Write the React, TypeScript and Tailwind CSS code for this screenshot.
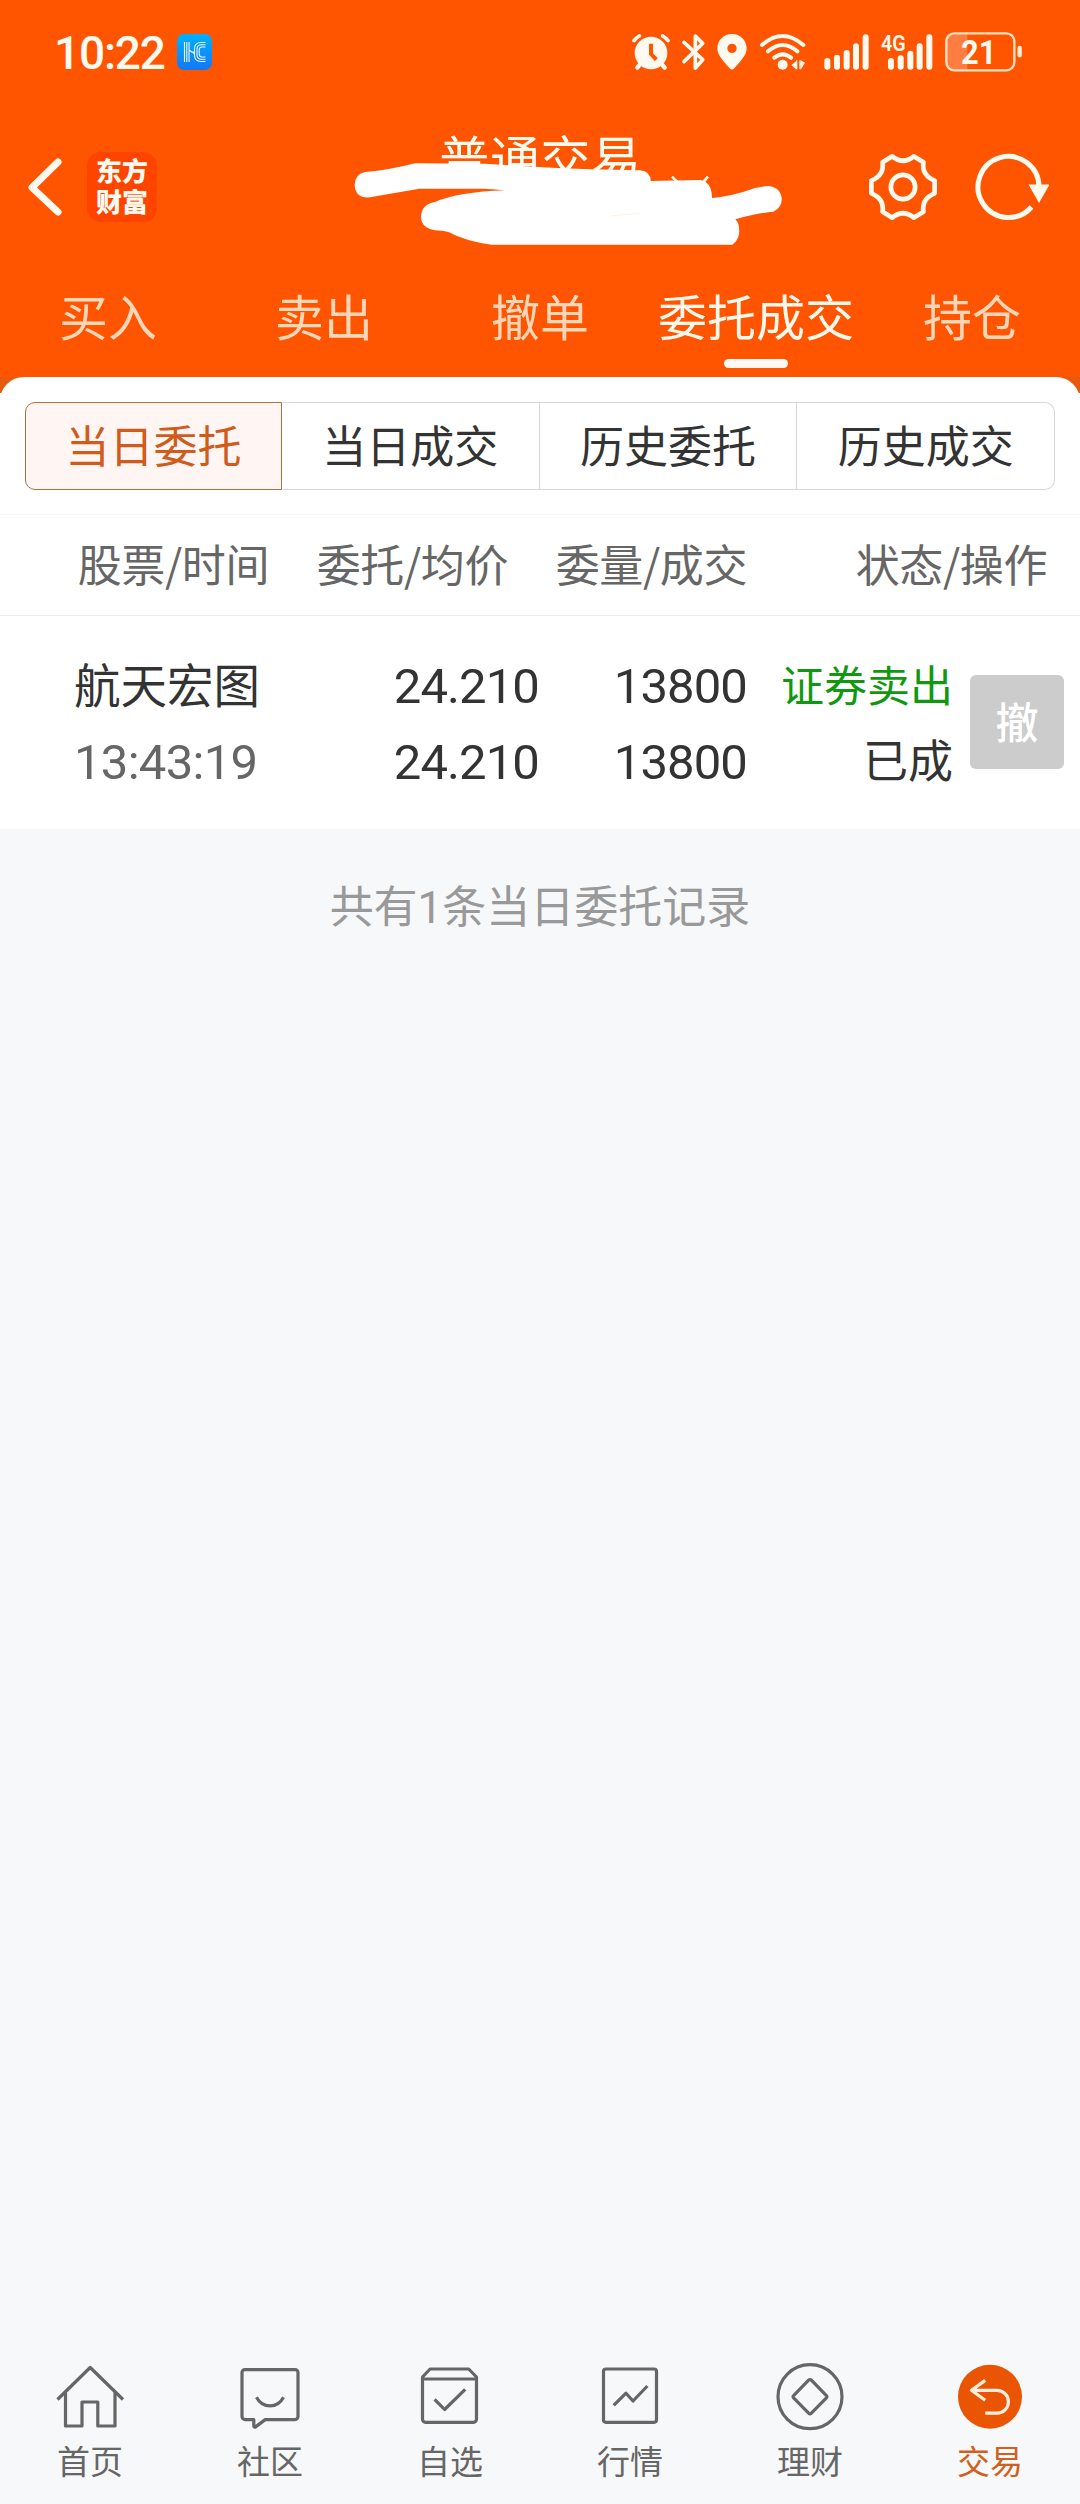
import type { ReactNode } from 'react';

const topTabs = ['买入', '卖出', '撤单', '委托成交', '持仓'];
const segments = ['当日委托', '当日成交', '历史委托', '历史成交'];

const navItems: { label: string; icon: ReactNode }[] = [
  {
    label: '首页',
    icon: (
      <>
        <path d="M3.5 37.5 36.2 5.5 69 37.5" />
        <path d="M11.5 30.5V64H28V40h15.8v24H61V30.5" />
      </>
    ),
  },
  {
    label: '社区',
    icon: (
      <>
        <path d="M11 7.6h50a3 3 0 0 1 3 3v44a3 3 0 0 1-3 3H31.2l-10 7.5q-1.4.4-1.4-1.4v-6.1H11a3 3 0 0 1-3-3v-44a3 3 0 0 1 3-3z" />
        <path d="M22.5 35.3c6 11.5 21 11.5 27 0" />
      </>
    ),
  },
  {
    label: '自选',
    icon: (
      <>
        <path d="M8.5 17h54v40.3a3 3 0 0 1-3 3h-48a3 3 0 0 1-3-3V15l7.6-8h38.6l7.8 8v3" />
        <path d="M20.6 37.3 30.6 47.5 51.2 27.4" />
      </>
    ),
  },
  {
    label: '行情',
    icon: (
      <>
        <rect x="9.5" y="7" width="53" height="53.3" rx="2.5" />
        <path d="M19.7 43.3 32 31.2l7 7.8 14.4-15" />
      </>
    ),
  },
  {
    label: '理财',
    icon: (
      <>
        <circle cx="36" cy="34.7" r="32" />
        <path d="m34.6 18.2-15 15.4q-1 1.1 0 2.2l15 15.4q1.4 1.4 2.8 0l15-15.400q1-1.100 0-2.200l-15-15.400q-1.400-1.400-2.800 0z" />
      </>
    ),
  },
  {
    label: '交易',
    icon: (
      <>
        <circle cx="36" cy="34.7" r="32" fill="#ea5504" stroke="none" />
        <path d="M31.2 18.4 17.5 28.3l13.7 10M17.5 28.3H43a11.4 11.4 0 0 1 0 22.8H31.2" stroke="#ffeedd" />
      </>
    ),
  },
];

function StatusBar() {
  return (
    <div className="flex h-[105px] items-center pl-[54px] text-[#fffaf0]">
      <span className="w-[123px] font-['Roboto'] text-[46px] leading-none font-medium tracking-[-1.2px]">10:22</span>
      <svg className="mb-[1px]" width="35" height="36" viewBox="0 0 35 36">
        <defs>
          <linearGradient id="hc" x1="0" y1="0" x2="0" y2="1">
            <stop offset="0" stopColor="#00b0ff" />
            <stop offset="1" stopColor="#1677f5" />
          </linearGradient>
        </defs>
        <rect width="35" height="36" rx="7" fill="url(#hc)" />
        <g fill="none" stroke="#e8f8ff" strokeWidth="1.1">
          <path d="M7.5 8v20M9.8 8v20M12.1 8v20M12 16l6 4M14 18h4" />
          <path d="M28.5 8.5H24q-6.5 0-6.5 6.5v6q0 6.5 6.5 6.5h4.5M28.5 10.8H24.5q-4.5 0-4.5 4.5v5.4q0 4.5 4.5 4.5h4M28.5 13H25q-2.8 0-2.8 3v4q0 3 2.8 3h3.5" />
        </g>
      </svg>

      <div className="ml-[420px] flex items-center pb-[2px]">
        {/* alarm */}
        <svg width="38" height="38" viewBox="96 98 114 114" fill="none" stroke="currentColor" strokeLinecap="round">
          <circle cx="153" cy="158" r="49" fill="currentColor" stroke="none" />
          <path d="M102 121q7-9 16-14M204 121q-7-9-16-14" strokeWidth="11" />
          <path d="m122 190-10 12M184 190l10 12" strokeWidth="13" />
          <path d="M153 130v31l16 17" stroke="#ff5500" strokeWidth="12" strokeLinecap="butt" />
        </svg>
        {/* bluetooth */}
        <svg className="ml-3" width="23" height="38" viewBox="246 98 69 114" fill="none" stroke="currentColor" strokeWidth="11" strokeLinejoin="round" strokeLinecap="round">
          <path d="m252 126 56 52-22 25v-96l22 22-56 55" />
        </svg>
        {/* location */}
        <svg className="ml-3" width="30" height="38" viewBox="351 98 90 114">
          <path fill="currentColor" fillRule="evenodd" d="M396 101c25 0 44 19 44 43 0 22-19 39-37 60q-7 7-14 0c-18-21-37-38-37-60 0-24 19-43 44-43zm0 29a14 14 0 1 0 0 28 14 14 0 0 0 0-28z" />
        </svg>
        {/* wifi */}
        <svg className="ml-3" width="47" height="38" viewBox="475 98 141 114" fill="none" stroke="currentColor" strokeWidth="12" strokeLinecap="round">
          <path d="M484 134q62-54 124 0M502 153q44-38 88 0M521 172q25-20 50 0" />
          <circle cx="546" cy="193" r="15" fill="currentColor" stroke="none" />
          <path d="m572 194 14-11v24zM613 187l-13-7v28z" fill="currentColor" stroke="none" />
          <path d="M588 180v27M598 180v27" strokeWidth="4" strokeLinecap="butt" />
        </svg>
        {/* signal, sim 1 */}
        <svg className="ml-[18px]" width="46" height="38" viewBox="672 98 138 114" stroke="currentColor" strokeWidth="18" strokeLinecap="round">
          <path d="M682 182v17M711 172v27M740 158v41M768 138v61M797 111v88" />
        </svg>
        {/* signal, sim 2 */}
        <svg className="ml-[10px] overflow-visible" width="54" height="38" viewBox="841 98 162 114" stroke="currentColor" strokeWidth="18" strokeLinecap="round">
          <path d="M874 182v17M903 174v25M932 160v39M960 138v61M989 111v88" />
          <text x="844" y="153" fontSize="67" fontFamily="Roboto, sans-serif" fontWeight="600" fill="currentColor" stroke="none" textLength="74" lengthAdjust="spacingAndGlyphs">4G</text>
        </svg>
        {/* battery */}
        <svg className="ml-[10px]" width="80" height="40" viewBox="1031 95 240 120">
          <path d="M1101 102h-38q-23 0-23 24v58q0 24 23 24h38z" fill="#ff7d40" />
          <rect x="1038" y="99" width="204" height="111" rx="24" fill="none" stroke="#ffe0c0" strokeWidth="7" />
          <path d="M1258 143v22" stroke="#ffe9cf" strokeWidth="13" strokeLinecap="round" />
          <text x="1135" y="191" textAnchor="middle" fontSize="100" fontFamily="Roboto, sans-serif" fontWeight="700" fill="currentColor" textLength="106" lengthAdjust="spacingAndGlyphs">21</text>
        </svg>
      </div>
    </div>
  );
}

function TitleBar() {
  return (
    <div className="relative flex h-[165px] items-center justify-between pr-[31px] pb-[1px] pl-[27px] text-[#fffaf0]">
      <div className="flex items-center">
        <svg width="36" height="60" viewBox="0 0 36 60" fill="none" stroke="currentColor" strokeWidth="7" strokeLinecap="round" strokeLinejoin="round">
          <path d="M31 5 5 30.5 31 55" />
        </svg>
        <div className="ml-6 flex h-[70px] w-[70px] items-center justify-center rounded-[14px] bg-[#ff4400] pb-[4px] text-center text-[26px] leading-[31px] font-black">
          东方
          <br />
          财富
        </div>
      </div>
      <span className="mb-[63px] ml-[57px] text-[50px] leading-[60px] tracking-[0.6px]">普通交易</span>
      <div className="flex items-center gap-9">
        <svg width="72" height="72" viewBox="-37 -37 74 74" fill="none" stroke="currentColor" strokeWidth="4.8" strokeLinejoin="round">
          <circle r="12.5" />
          <path d="M-11-31.5Q0-22.5 11-31.5L21-25.5Q19-12 32.5-6.5V6.5Q19 12 21 25.5L11 31.5Q0 22.5-11 31.5L-21 25.5Q-19 12-32.5 6.5V-6.5Q-19-12-21-25.5Z" />
        </svg>
        <svg width="74" height="72" viewBox="0 0 74 72" fill="none" stroke="currentColor" strokeWidth="5">
          <path d="M64 36A30.5 30.5 0 1 0 56.5 56" />
          <path d="M53.5 33.5h21L64 52z" fill="currentColor" stroke="none" />
        </svg>
      </div>
      {/* hand-drawn redaction over the account line */}
      <svg className="absolute top-[5px] left-[330px]" width="480" height="150" viewBox="0 0 1440 450">
        <path d="m1026 200 18 18M1134 200l-14 16" stroke="#fffaf0" strokeWidth="8" />
        <path fill="#fff" d="M105 186Q180 180 255 160L465 161Q620 172 780 178L930 181Q962 184 962 213L1110 210Q1145 214 1146 264Q1210 258 1275 234L1312 228A40 40 0 0 1 1330 305Q1290 308 1216 328Q1230 340 1227 372Q1224 392 1207 404H485Q410 395 355 366L338 362Q273 362 273 320Q275 282 315 276Q385 246 525 241L465 236H268L120 262Q76 266 74 225Q75 192 105 186Z" />
        <path d="m840 318 90-8" stroke="#ffeadb" strokeWidth="2" />
      </svg>
    </div>
  );
}

export default function App() {
  return (
    <div className="flex h-[2504px] w-[1080px] flex-col bg-[#f7f8fa] font-['Noto_Sans_CJK_SC',sans-serif] text-[#333333]">
      <header className="flex h-[377px] flex-col bg-[#ff5500]">
        <StatusBar />
        <TitleBar />
        <div className="grid h-[107px] grid-cols-5">
          {topTabs.map((tab) => (
            <div key={tab} className="flex flex-col items-center pt-[8px]">
              <span className={`text-[49px] leading-[74px] whitespace-nowrap ${tab === '委托成交' ? 'text-[#fff8ec]' : 'text-[#ffd6b8]'}`}>{tab}</span>
              {tab === '委托成交' && <span className="mt-[7px] h-[9px] w-16 rounded-full bg-[#fffaf5]" />}
            </div>
          ))}
        </div>
      </header>

      <div className="h-[16px] overflow-hidden bg-[#e55a10]">
        <div className="h-12 rounded-t-[24px] bg-white" />
      </div>

      <main className="bg-white">
        <div className="flex h-[121px] px-[25px] pt-[9px]">
          {segments.map((name, i) => (
            <div
              key={name}
              className={`flex h-[88px] items-center justify-center border pb-[5px] text-[44px] leading-none ${
                i === 0 ? 'w-[257px] rounded-l-[10px] border-[#b0703f] bg-[#fff6f3] text-[#cf5c1c]' : 'flex-1 border-l-0 border-[#d6d9d9]'
              } ${i === 3 ? 'rounded-r-[10px]' : ''}`}
            >
              {name}
            </div>
          ))}
        </div>

        <div className="flex h-[102px] items-center border-t border-b border-t-[#f5f5f5] border-b-[#ebebeb] pr-[33px] pb-[5px] text-[44px] leading-none tracking-[-0.4px] text-[#666666]">
          <span className="w-[269px] text-right">股票/时间</span>
          <span className="w-[239px] text-right">委托/均价</span>
          <span className="w-[239px] text-right">委量/成交</span>
          <span className="flex-1 text-right">状态/操作</span>
        </div>

        <div className="flex h-[213px] pt-[29px]">
          <div className="flex w-[300px] flex-col pl-[74px] leading-[76px]">
            <span className="text-[46.5px]">航天宏图</span>
            <span className="mt-1 font-['Roboto'] text-[49px] tracking-[-0.7px] text-[#666666]">13:43:19</span>
          </div>
          <div className="flex w-[239px] flex-col pt-1 text-right font-['Roboto'] text-[49px] leading-[76px] tracking-[-0.9px]">
            <span>24.210</span>
            <span>24.210</span>
          </div>
          <div className="flex w-[208px] flex-col pt-1 text-right font-['Roboto'] text-[49px] leading-[76px] tracking-[-0.9px]">
            <span>13800</span>
            <span>13800</span>
          </div>
          <div className="flex w-[206px] flex-col text-right leading-[76px]">
            <span className="text-[43px] text-[#109910]">证券卖出</span>
            <span className="text-[45px]">已成</span>
          </div>
          <button className="mt-[30px] ml-[17px] flex h-[94px] w-[94px] items-center justify-center rounded-[6px] bg-[#cccccc] pb-[4px] text-[43px] leading-none font-medium text-white">
            撤
          </button>
        </div>
      </main>

      <p className="mt-[49px] text-center font-['Roboto','Noto_Sans_CJK_SC',sans-serif] text-[44px] leading-[60px] text-[#999999]">
        共有1条当日委托记录
      </p>

      <nav className="mt-auto grid h-[142px] grid-cols-6">
        {navItems.map((item) => (
          <div key={item.label} className={`flex flex-col items-center ${item.label === '交易' ? 'text-[#d0601c]' : 'text-[#666666]'}`}>
            <svg width="72" height="72" viewBox="0 0 72 72" fill="none" stroke="currentColor" strokeWidth="3.2" strokeLinejoin="round">
              {item.icon}
            </svg>
            <span className="mt-[5px] text-[33px] leading-[42px]">{item.label}</span>
          </div>
        ))}
      </nav>
    </div>
  );
}
